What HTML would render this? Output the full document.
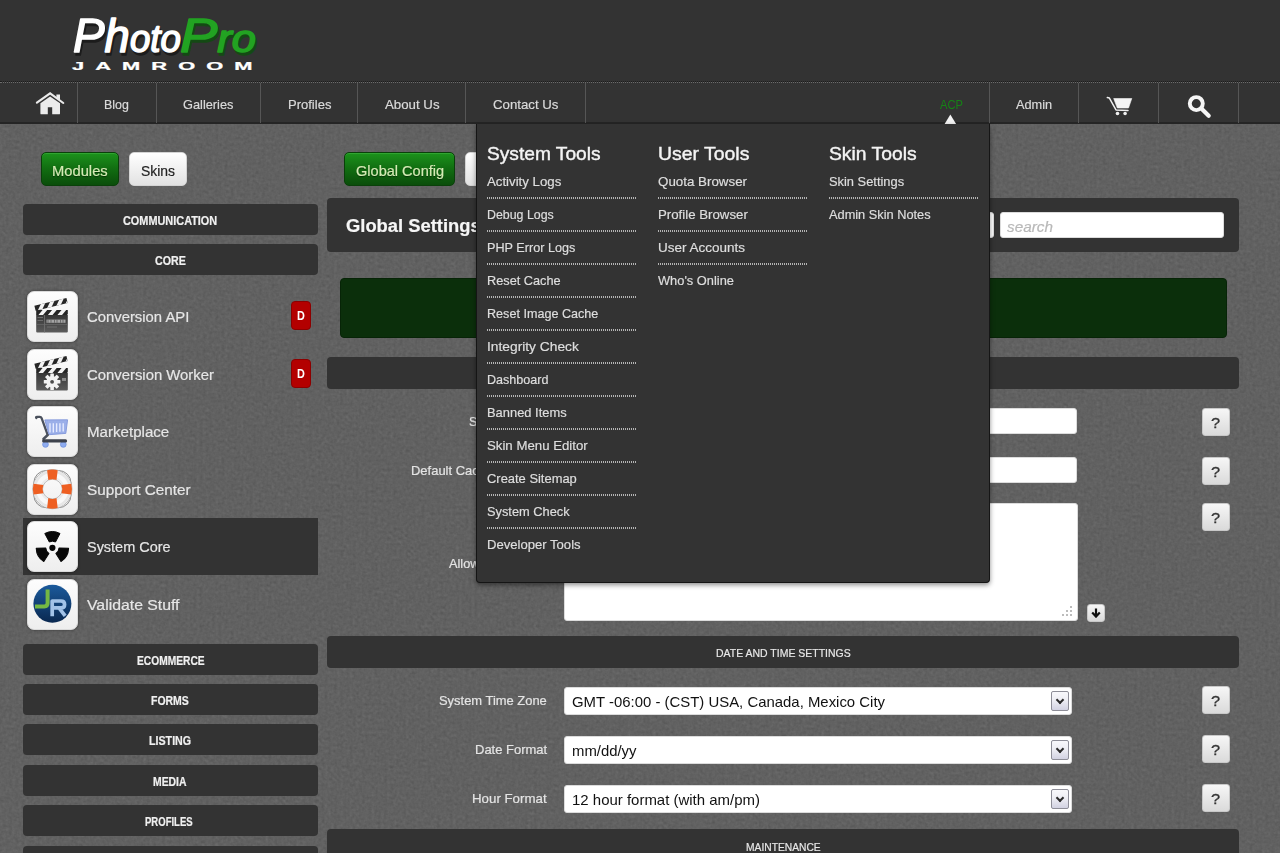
<!DOCTYPE html>
<html lang="en">
<head>
<meta charset="utf-8">
<title>Global Settings - PhotoPro Jamroom</title>
<style>
*{box-sizing:border-box;margin:0;padding:0}
html,body{width:1280px;height:853px;overflow:hidden}
body{position:relative;background:#5d5d5d;font-family:"Liberation Sans",sans-serif;color:#e6e6e6;font-size:13px}
.abs{position:absolute}
#noise{position:absolute;left:0;top:0;width:1280px;height:853px;opacity:.13;pointer-events:none}
.x{text-decoration:none;font-weight:normal;position:absolute;white-space:nowrap;transform-origin:0 50%;display:block;-webkit-text-stroke:.2px}
#header{position:absolute;left:0;top:0;width:1280px;height:82px;background:#333;border-bottom:1px dotted #1c1c1c}
#nav{position:absolute;left:0;top:82px;width:1280px;height:42px;background:#333;border-top:1px dotted #6c6c6c;border-bottom:2px solid #252525}
#nav .sep{position:absolute;top:0;height:40px;width:0;border-left:1px solid #565656}
.btn{position:absolute;height:34px;border-radius:5px}
.btn.g{background:linear-gradient(#1c931c,#127012 45%,#0a4d0a);border:1px solid #0a400a;box-shadow:inset 0 1px 0 rgba(90,200,90,.35)}
.btn.w{background:linear-gradient(#fff,#e2e2e2);border:1px solid #d4d4d4}
.cat{position:absolute;left:23px;width:295px;height:31px;background:#333;border-radius:4px}
.row{position:absolute;left:23px;width:295px;height:57px;background:#333}
.ic{position:absolute;left:27px;width:51px;height:51px;border-radius:7px;background:linear-gradient(#fdfdfd,#eeeeee);border:1px solid #dadada;box-shadow:0 0 3px rgba(0,0,0,.45)}
.ic svg{position:absolute;left:-1px;top:-1px;width:50px;height:50px}
.d{position:absolute;left:291px;width:20px;height:29px;border-radius:4px;background:#b30000;border:1px solid #8c0000}
.bar{position:absolute;left:327px;width:912px;background:#333;border-radius:4px}
.inp{position:absolute;background:#fff;border:1px solid #dcdcdc;border-radius:3px}
.q{position:absolute;left:1202px;width:28px;height:28px;border-radius:3px;background:linear-gradient(#f6f6f6,#dadada);border:1px solid #c8c8c8}
.sl{position:absolute;left:564px;width:508px;height:28px;background:#fff;border:1px solid #dcdcdc;border-radius:3px}
.sl i{position:absolute;right:2px;top:3px;width:18px;height:20px;border:1px solid #8e8e98;border-radius:2px;background:linear-gradient(#f8f8fb,#eeeef4 45%,#d2d2e2)}
.sl i:after{content:"";position:absolute;left:5px;top:4.5px;width:4px;height:4px;border-right:2px solid #2a2a2a;border-bottom:2px solid #2a2a2a;transform:rotate(45deg)}
#dd{position:absolute;left:476px;top:124px;width:514px;height:459px;background:#333;border:1px solid #151515;border-top:0;border-radius:0 0 4px 4px;box-shadow:0 2px 5px rgba(0,0,0,.45)}
.dot{position:absolute;width:150px;height:2px;background:repeating-linear-gradient(90deg,#b4b4b4 0,#b4b4b4 1px,transparent 1px,transparent 2px)}
</style>
</head>
<body>
<svg id="noise" width="1280" height="853"><filter id="nf" x="0" y="0" width="100%" height="100%" color-interpolation-filters="sRGB"><feTurbulence type="fractalNoise" baseFrequency="0.32" numOctaves="2" seed="3"/><feColorMatrix type="matrix" values="0.36 0.36 0.36 0 -0.04  0.36 0.36 0.36 0 -0.04  0.36 0.36 0.36 0 -0.04  0 0 0 0 1"/></filter><rect width="1280" height="853" filter="url(#nf)"/></svg>
<div id="header">
<svg class="abs" style="left:60px;top:0" width="220" height="82" viewBox="0 0 220 82">
<g font-family="'Liberation Sans',sans-serif" font-weight="normal" font-style="italic" stroke-linejoin="round" stroke-linecap="round" stroke-width="1.5">
<text x="13" y="52" fill="#1c1c1c" stroke="#1c1c1c" transform="translate(1.5,2.5)" textLength="108" lengthAdjust="spacingAndGlyphs"><tspan font-size="49">P</tspan><tspan font-size="47">h</tspan><tspan font-size="38">oto</tspan></text>
<text x="13" y="52" fill="#fff" stroke="#fff" textLength="108" lengthAdjust="spacingAndGlyphs"><tspan font-size="49">P</tspan><tspan font-size="47">h</tspan><tspan font-size="38">oto</tspan></text>
<text x="120" y="52" fill="#144a14" stroke="#144a14" transform="translate(1.5,2.5)" textLength="76" lengthAdjust="spacingAndGlyphs"><tspan font-size="49">P</tspan><tspan font-size="38">ro</tspan></text>
<text x="120" y="52" fill="#22a322" stroke="#22a322" textLength="76" lengthAdjust="spacingAndGlyphs"><tspan font-size="49">P</tspan><tspan font-size="38">ro</tspan></text>
</g>
<g transform="translate(12,70) scale(1.9,1)"><text x="0" y="0" font-family="'Liberation Sans',sans-serif" font-weight="bold" font-size="11.5" fill="#fff" stroke="#fff" stroke-width=".25" textLength="95" lengthAdjust="spacing">JAMROOM</text></g>
</svg>
</div>

<div id="nav">
<span class="sep" style="left:77px"></span>
<span class="sep" style="left:156px"></span>
<span class="sep" style="left:260px"></span>
<span class="sep" style="left:357px"></span>
<span class="sep" style="left:465px"></span>
<span class="sep" style="left:585px"></span>
<span class="sep" style="left:989px"></span>
<span class="sep" style="left:1078px"></span>
<span class="sep" style="left:1158px"></span>
<span class="sep" style="left:1238px"></span>
<svg class="abs" style="left:34px;top:7px" width="32" height="28" viewBox="0 0 32 28"><path d="M2.9 12.7 L16.1 3.3 L29.3 13" fill="none" stroke="#ebebeb" stroke-width="2.1" stroke-linecap="round" stroke-linejoin="miter"/><path d="M22.4 4.5 H26 V10.2 L22.4 7.4 Z" fill="#ebebeb"/><path d="M6.4 13.2 L16.1 6.5 L26 13.2 V23.4 Q26 24.3 25.1 24.3 H18.2 V17.2 H13.8 V24.3 H7.3 Q6.4 24.3 6.4 23.4 Z" fill="#ebebeb"/></svg>
<svg class="abs" style="left:1105px;top:12px" width="30" height="24" viewBox="0 0 30 24"><path d="M2.3 2.6 L4.4 3.1 L11 14.9 L23 15.4" fill="none" stroke="#f0f0f0" stroke-width="1.5" stroke-linecap="round" stroke-linejoin="round"/><path d="M8.7 3.5 L26.8 3.5 L23.5 13 L12.3 13 Z" fill="#f4f4f4" stroke="#f4f4f4" stroke-width=".6" stroke-linejoin="round"/><circle cx="12.5" cy="18.5" r="1.8" fill="#f0f0f0"/><circle cx="20.1" cy="18.5" r="1.8" fill="#f0f0f0"/></svg>
<svg class="abs" style="left:1186px;top:11px" width="28" height="26" viewBox="0 0 28 26"><circle cx="10.3" cy="9.6" r="6.5" fill="none" stroke="#f6f6f6" stroke-width="3.9"/><path d="M15.6 14.8 L22.7 21.8" stroke="#f6f6f6" stroke-width="4.2" stroke-linecap="round"/></svg>
<svg class="abs" style="left:944px;top:31px" width="13" height="11" viewBox="0 0 13 11"><path d="M0.6 10 L6.35 0.5 L12.1 10 Z" fill="#f4f4f4"/></svg>
</div>
<a class="x" style="left:104.2px;top:95.0px;line-height:20px;font-size:13.5px;color:#dadada;transform:scaleX(0.9178);">Blog</a>
<a class="x" style="left:183.4px;top:95.0px;line-height:20px;font-size:13.5px;color:#dadada;transform:scaleX(0.9461);">Galleries</a>
<a class="x" style="left:287.9px;top:95.0px;line-height:20px;font-size:13.5px;color:#dadada;transform:scaleX(0.9643);">Profiles</a>
<a class="x" style="left:384.5px;top:95.0px;line-height:20px;font-size:13.5px;color:#dadada;transform:scaleX(0.9816);">About Us</a>
<a class="x" style="left:493.0px;top:95.0px;line-height:20px;font-size:13.5px;color:#dadada;transform:scaleX(0.9795);">Contact Us</a>
<a class="x" style="left:939.5px;top:94.7px;line-height:20px;font-size:13.5px;color:#168216;-webkit-text-stroke:0;transform:scaleX(0.8251);">ACP</a>
<a class="x" style="left:1015.8px;top:95.0px;line-height:20px;font-size:13.5px;color:#dadada;transform:scaleX(0.9437);">Admin</a>
<aside id="sidebar">
<div class="btn g" style="left:41px;top:152px;width:78px"></div>
<span class="x" style="left:52.1px;top:160.6px;line-height:20px;font-size:15px;color:#d4ecb4;text-shadow:0 1px 1px #063006;transform:scaleX(0.9823);">Modules</span>
<div class="btn w" style="left:129px;top:152px;width:58px"></div>
<span class="x" style="left:140.9px;top:160.7px;line-height:20px;font-size:15px;color:#222;transform:scaleX(0.9267);">Skins</span>
<div class="cat" style="top:204px"></div>
<span class="x" style="left:123.1px;top:211.3px;line-height:20px;font-size:12px;color:#f0f0f0;font-weight:bold;transform:scaleX(0.9080);">COMMUNICATION</span>
<div class="cat" style="top:244px"></div>
<span class="x" style="left:155.4px;top:251.3px;line-height:20px;font-size:12px;color:#f0f0f0;font-weight:bold;transform:scaleX(0.8889);">CORE</span>
<div class="ic" style="top:291px"><svg viewBox="0 0 50 50"><defs><linearGradient id="cb1" x1="0" y1="0" x2="0" y2="1"><stop offset="0" stop-color="#353535"/><stop offset="1" stop-color="#5c5c5c"/></linearGradient><clipPath id="ca1"><rect x="9.2" y="19" width="31.6" height="5"/></clipPath><clipPath id="cc11"><rect x="8" y="14.6" width="33" height="5.2"/></clipPath></defs><rect x="9.2" y="23.5" width="31.6" height="18" rx="1" fill="url(#cb1)"/><rect x="9.2" y="19" width="31.6" height="5" fill="#262626"/><g clip-path="url(#ca1)" fill="#f3f3f3"><path d="M11 24.5 l5 -6 h4.6 l-5 6z M20.5 24.5 l5 -6 h4.6 l-5 6z M30 24.5 l5 -6 h4.6 l-5 6z M39.5 24.5 l5 -6 h4.6 l-5 6z"/></g><g transform="rotate(-13.7 8.2 17.2)"><rect x="8" y="14.6" width="33" height="5.2" fill="#262626"/><g clip-path="url(#cc11)" fill="#f3f3f3"><path d="M10 20.3 l5 -6.2 h4.6 l-5 6.2z M19.5 20.3 l5 -6.2 h4.6 l-5 6.2z M29 20.3 l5 -6.2 h4.6 l-5 6.2z M38.5 20.3 l5 -6.2 h4.6 l-5 6.2z"/></g></g><path d="M17.5 24 V41.5" stroke="#777" stroke-width=".7"/><path d="M9.2 33.5 H40.8" stroke="#6e6e6e" stroke-width=".6"/><rect x="19.5" y="28.6" width="19" height="3.2" fill="#a4a4a4"/><path d="M21 28.6v3.2M24 28.6v3.2M27.5 28.6v3.2M30 28.6v3.2M33.5 28.6v3.2M36 28.6v3.2" stroke="#555" stroke-width=".7"/><rect x="10.5" y="26" width="5.5" height="1" fill="#6c6c6c"/><rect x="10.5" y="29" width="5.5" height="1" fill="#6c6c6c"/><rect x="20" y="35.5" width="10" height="1" fill="#707070"/></svg></div>
<a class="x" style="left:87.2px;top:307.3px;line-height:20px;font-size:15.4px;color:#e6e6e6;transform:scaleX(0.9645);">Conversion API</a>
<div class="d" style="top:301px"></div>
<span class="x" style="left:297.3px;top:306.0px;line-height:20px;font-size:12.5px;color:#fff;font-weight:bold;-webkit-text-stroke:0;transform:scaleX(0.8692);">D</span>
<div class="ic" style="top:349px"><svg viewBox="0 0 50 50"><defs><linearGradient id="cb2" x1="0" y1="0" x2="0" y2="1"><stop offset="0" stop-color="#353535"/><stop offset="1" stop-color="#5c5c5c"/></linearGradient><clipPath id="ca2"><rect x="9.2" y="19" width="31.6" height="5"/></clipPath><clipPath id="cc12"><rect x="8" y="14.6" width="33" height="5.2"/></clipPath></defs><rect x="9.2" y="23.5" width="31.6" height="18" rx="1" fill="url(#cb2)"/><rect x="9.2" y="19" width="31.6" height="5" fill="#262626"/><g clip-path="url(#ca2)" fill="#f3f3f3"><path d="M11 24.5 l5 -6 h4.6 l-5 6z M20.5 24.5 l5 -6 h4.6 l-5 6z M30 24.5 l5 -6 h4.6 l-5 6z M39.5 24.5 l5 -6 h4.6 l-5 6z"/></g><g transform="rotate(-13.7 8.2 17.2)"><rect x="8" y="14.6" width="33" height="5.2" fill="#262626"/><g clip-path="url(#cc12)" fill="#f3f3f3"><path d="M10 20.3 l5 -6.2 h4.6 l-5 6.2z M19.5 20.3 l5 -6.2 h4.6 l-5 6.2z M29 20.3 l5 -6.2 h4.6 l-5 6.2z M38.5 20.3 l5 -6.2 h4.6 l-5 6.2z"/></g></g><g transform="translate(25.1 32.8)" fill="#f2f2f2"><circle r="5.7"/><rect x="-1.8" y="-8.3" width="3.6" height="16.6" rx=".5" transform="rotate(0)"/><rect x="-1.8" y="-8.3" width="3.6" height="16.6" rx=".5" transform="rotate(45)"/><rect x="-1.8" y="-8.3" width="3.6" height="16.6" rx=".5" transform="rotate(90)"/><rect x="-1.8" y="-8.3" width="3.6" height="16.6" rx=".5" transform="rotate(135)"/><circle r="1.9" fill="#4a4a4a"/></g><rect x="35" y="29" width="4" height="3" fill="#8a8a8a"/></svg></div>
<a class="x" style="left:87.2px;top:365.3px;line-height:20px;font-size:15.4px;color:#e6e6e6;transform:scaleX(0.9657);">Conversion Worker</a>
<div class="d" style="top:359px"></div>
<span class="x" style="left:297.3px;top:364.0px;line-height:20px;font-size:12.5px;color:#fff;font-weight:bold;-webkit-text-stroke:0;transform:scaleX(0.8692);">D</span>
<div class="ic" style="top:406px"><svg viewBox="0 0 50 50"><circle cx="18.5" cy="38.4" r="2.9" fill="#8eacf0" stroke="#6f8fdc" stroke-width=".7"/><circle cx="36.3" cy="38.4" r="2.9" fill="#8eacf0" stroke="#6f8fdc" stroke-width=".7"/><path d="M9.3 12 Q8.6 10.9 10 10.9 h2.8 q1.3 0 1.8 1.3 l6 16.4" fill="none" stroke="#4b515d" stroke-width="2.3" stroke-linecap="round"/><path d="M17.8 13.9 L40.6 13.8 L38.8 27.4 L22 28.7 Z" fill="#9bafe9" stroke="#8196da" stroke-width=".9"/><path d="M23 17.3 V26.6 M26.3 17.3 V26.4 M29.6 17.3 V26.1 M32.9 17.3 V25.8 M36.2 17.3 V25.5" stroke="#e6ebff" stroke-width="1.4"/><path d="M20.7 29 L16.4 33 " fill="none" stroke="#4b515d" stroke-width="2.4" stroke-linecap="round"/><path d="M16.6 34.9 H38.6" fill="none" stroke="#3d424c" stroke-width="3.1" stroke-linecap="round"/></svg></div>
<a class="x" style="left:87.2px;top:422.3px;line-height:20px;font-size:15.4px;color:#e6e6e6;transform:scaleX(0.9807);">Marketplace</a>
<div class="ic" style="top:464px"><svg viewBox="0 0 50 50"><rect x="6.8" y="6.5" width="37.2" height="37.2" rx="12.5" fill="none" stroke="#8c8c8c" stroke-width="1"/><circle cx="25.4" cy="25.1" r="14.75" fill="none" stroke="#f8f8f8" stroke-width="9.7"/><circle cx="25.4" cy="25.1" r="19.6" fill="none" stroke="#a0a0a0" stroke-width=".7"/><circle cx="25.4" cy="25.1" r="9.9" fill="none" stroke="#a0a0a0" stroke-width=".7"/><circle cx="25.4" cy="25.1" r="17.6" fill="none" stroke="#e6e6e6" stroke-width="2.4"/><circle cx="25.4" cy="25.1" r="11.4" fill="none" stroke="#ececec" stroke-width="1.6"/><g fill="#ee5f22"><path d="M20.1 6.25 A19.6 19.6 0 0 1 30.7 6.25 L29.5 16.1 A9.9 9.9 0 0 0 21.3 16.1 Z"/><path d="M20.1 6.25 A19.6 19.6 0 0 1 30.7 6.25 L29.5 16.1 A9.9 9.9 0 0 0 21.3 16.1 Z" transform="rotate(90 25.4 25.1)"/><path d="M20.1 6.25 A19.6 19.6 0 0 1 30.7 6.25 L29.5 16.1 A9.9 9.9 0 0 0 21.3 16.1 Z" transform="rotate(180 25.4 25.1)"/><path d="M20.1 6.25 A19.6 19.6 0 0 1 30.7 6.25 L29.5 16.1 A9.9 9.9 0 0 0 21.3 16.1 Z" transform="rotate(270 25.4 25.1)"/></g></svg></div>
<a class="x" style="left:87.2px;top:480.3px;line-height:20px;font-size:15.4px;color:#e6e6e6;transform:scaleX(0.9927);">Support Center</a>
<div class="row" style="top:518px"></div>
<div class="ic" style="top:521px"><svg viewBox="0 0 50 50"><g transform="translate(25.4 26.8)" fill="#080808"><circle r="3.1"/><path d="M-3.10 -5.83 L-7.61 -14.30 A16.2 16.2 0 0 1 7.61 -14.30 L3.10 -5.83 A6.6 6.6 0 0 0 -3.10 -5.83 Z" stroke="#080808" stroke-width="1" stroke-linejoin="round"/><path d="M-3.10 -5.83 L-7.61 -14.30 A16.2 16.2 0 0 1 7.61 -14.30 L3.10 -5.83 A6.6 6.6 0 0 0 -3.10 -5.83 Z" stroke="#080808" stroke-width="1" stroke-linejoin="round" transform="rotate(120)"/><path d="M-3.10 -5.83 L-7.61 -14.30 A16.2 16.2 0 0 1 7.61 -14.30 L3.10 -5.83 A6.6 6.6 0 0 0 -3.10 -5.83 Z" stroke="#080808" stroke-width="1" stroke-linejoin="round" transform="rotate(240)"/></g></svg></div>
<a class="x" style="left:87.2px;top:537.3px;line-height:20px;font-size:15.4px;color:#e6e6e6;transform:scaleX(0.9390);">System Core</a>
<div class="ic" style="top:579px"><svg viewBox="0 0 50 50"><defs><linearGradient id="jrg" x1="0" y1="0" x2="0" y2="1"><stop offset="0" stop-color="#1b5a9c"/><stop offset="1" stop-color="#0a2850"/></linearGradient></defs><circle cx="25.4" cy="24.8" r="19" fill="url(#jrg)"/><path d="M20.6 10.5 V24 Q20.6 27.4 17.4 27.4 H8" fill="none" stroke="#74b843" stroke-width="4"/><path d="M25.2 37.2 V22 H34 Q37.6 22 37.6 25.4 Q37.6 28.8 34 28.8 H26.5 M32 28.8 L38.2 36.8" fill="none" stroke="#a3c3e8" stroke-width="3.7" stroke-linejoin="round"/></svg></div>
<a class="x" style="left:87.2px;top:595.3px;line-height:20px;font-size:15.4px;color:#e6e6e6;transform:scaleX(1.0264);">Validate Stuff</a>
<div class="cat" style="top:644px"></div>
<span class="x" style="left:136.5px;top:651.3px;line-height:20px;font-size:12px;color:#f0f0f0;font-weight:bold;transform:scaleX(0.8522);">ECOMMERCE</span>
<div class="cat" style="top:684px"></div>
<span class="x" style="left:151.0px;top:691.3px;line-height:20px;font-size:12px;color:#f0f0f0;font-weight:bold;transform:scaleX(0.8726);">FORMS</span>
<div class="cat" style="top:724px"></div>
<span class="x" style="left:149.2px;top:731.3px;line-height:20px;font-size:12px;color:#f0f0f0;font-weight:bold;transform:scaleX(0.8897);">LISTING</span>
<div class="cat" style="top:765px"></div>
<span class="x" style="left:153.3px;top:772.3px;line-height:20px;font-size:12px;color:#f0f0f0;font-weight:bold;transform:scaleX(0.8668);">MEDIA</span>
<div class="cat" style="top:805px"></div>
<span class="x" style="left:144.9px;top:812.3px;line-height:20px;font-size:12px;color:#f0f0f0;font-weight:bold;transform:scaleX(0.7935);">PROFILES</span>
<div class="cat" style="top:846px"></div>
<span class="x" style="left:149.6px;top:853.3px;line-height:20px;font-size:12px;color:#f0f0f0;font-weight:bold;transform:scaleX(0.8252);">SYSTEM</span>
</aside>
<main id="content">
<div class="btn g" style="left:344px;top:152px;width:111px"></div>
<span class="x" style="left:356.1px;top:160.6px;line-height:20px;font-size:15px;color:#d4ecb4;text-shadow:0 1px 1px #063006;transform:scaleX(0.9693);">Global Config</span>
<div class="btn w" style="left:465px;top:152px;width:60px"></div>
<span class="x" style="left:477.6px;top:160.7px;line-height:20px;font-size:15px;color:#222;transform:scaleX(0.9963);">Tools</span>
<div class="bar" style="top:198px;height:54px"></div>
<h1 class="x" style="left:346.3px;top:216.1px;line-height:20px;font-size:18.7px;color:#f6f6f6;font-weight:bold;transform:scaleX(0.9829);">Global Settings</h1>
<div class="inp" style="left:768px;top:212px;width:226px;height:26px"></div>
<div class="inp" style="left:1000px;top:212px;width:224px;height:26px"></div>
<span class="x" style="left:1006.5px;top:216.7px;line-height:20px;font-size:15px;color:#b8b8b8;font-style:italic;transform:scaleX(1.0193);">search</span>
<div class="abs" style="left:340px;top:278px;width:887px;height:60px;background:#0b2f0b;border:1px solid #072407;border-radius:4px"></div>
<span class="x" style="left:649.6px;top:298.7px;line-height:20px;font-size:14px;color:#dfe9df;transform:scaleX(1.0063);">The settings have been successfully saved</span>
<div class="bar" style="top:357px;height:32px"></div>
<span class="x" style="left:732.7px;top:364.0px;line-height:20px;font-size:11px;color:#e8e8e8;transform:scaleX(0.9131);">GENERAL SETTINGS</span>
<span class="x" style="left:469.1px;top:412.2px;line-height:20px;font-size:13px;color:#e4e4e4;transform:scaleX(0.9527);">System Name</span>
<div class="inp" style="left:564px;top:408px;width:513px;height:26px"></div>
<span class="x" style="left:410.6px;top:461.2px;line-height:20px;font-size:13px;color:#e4e4e4;transform:scaleX(0.9977);">Default Cache Seconds</span>
<div class="inp" style="left:564px;top:457px;width:513px;height:26px"></div>
<span class="x" style="left:448.6px;top:553.7px;line-height:20px;font-size:13px;color:#e4e4e4;transform:scaleX(0.9785);">Allowed Domains</span>
<div class="inp" style="left:564px;top:503px;width:514px;height:118px"><svg class="abs" style="right:4px;bottom:3px" width="12" height="12" viewBox="0 0 12 12"><g fill="#bcbcbc"><rect x="9" y="1" width="2" height="2"/><rect x="5" y="5" width="2" height="2"/><rect x="9" y="5" width="2" height="2"/><rect x="1" y="9" width="2" height="2"/><rect x="5" y="9" width="2" height="2"/><rect x="9" y="9" width="2" height="2"/></g></svg></div>
<div class="q" style="top:408px"></div>
<span class="x" style="left:1211.3px;top:413.0px;line-height:20px;font-size:15px;color:#333;-webkit-text-stroke:.3px;transform:scaleX(1.0906);">?</span>
<div class="q" style="top:457px"></div>
<span class="x" style="left:1211.3px;top:462.0px;line-height:20px;font-size:15px;color:#333;-webkit-text-stroke:.3px;transform:scaleX(1.0906);">?</span>
<div class="q" style="top:503px"></div>
<span class="x" style="left:1211.3px;top:508.0px;line-height:20px;font-size:15px;color:#333;-webkit-text-stroke:.3px;transform:scaleX(1.0906);">?</span>
<div class="q" style="top:686px"></div>
<span class="x" style="left:1211.3px;top:691.0px;line-height:20px;font-size:15px;color:#333;-webkit-text-stroke:.3px;transform:scaleX(1.0906);">?</span>
<div class="q" style="top:735px"></div>
<span class="x" style="left:1211.3px;top:740.0px;line-height:20px;font-size:15px;color:#333;-webkit-text-stroke:.3px;transform:scaleX(1.0906);">?</span>
<div class="q" style="top:784px"></div>
<span class="x" style="left:1211.3px;top:789.0px;line-height:20px;font-size:15px;color:#333;-webkit-text-stroke:.3px;transform:scaleX(1.0906);">?</span>
<div class="q" style="left:1087px;top:604px;width:18px;height:18px"><svg class="abs" style="left:3px;top:3px" width="10" height="10" viewBox="0 0 10 10"><path d="M5 0.5 V8 M1.2 4.6 L5 8.6 L8.8 4.6" fill="none" stroke="#111" stroke-width="2.2"/></svg></div>
<div class="bar" style="top:636px;height:32px"></div>
<span class="x" style="left:715.7px;top:642.7px;line-height:20px;font-size:11.6px;color:#e8e8e8;transform:scaleX(0.9038);">DATE AND TIME SETTINGS</span>
<label class="x" style="left:439.1px;top:691.0px;line-height:20px;font-size:13px;color:#e4e4e4;transform:scaleX(0.9945);">System Time Zone</label>
<div class="sl" style="top:687px"><i></i></div>
<span class="x" style="left:571.9px;top:691.9px;line-height:20px;font-size:15px;color:#111;-webkit-text-stroke:0;transform:scaleX(0.9942);">GMT -06:00 - (CST) USA, Canada, Mexico City</span>
<label class="x" style="left:474.7px;top:740.0px;line-height:20px;font-size:13px;color:#e4e4e4;transform:scaleX(0.9990);">Date Format</label>
<div class="sl" style="top:736px"><i></i></div>
<span class="x" style="left:571.9px;top:740.9px;line-height:20px;font-size:15px;color:#111;-webkit-text-stroke:0;transform:scaleX(0.9921);">mm/dd/yy</span>
<label class="x" style="left:472.3px;top:789.0px;line-height:20px;font-size:13px;color:#e4e4e4;transform:scaleX(1.0221);">Hour Format</label>
<div class="sl" style="top:785px"><i></i></div>
<span class="x" style="left:571.9px;top:789.9px;line-height:20px;font-size:15px;color:#111;-webkit-text-stroke:0;transform:scaleX(0.9978);">12 hour format (with am/pm)</span>
<div class="bar" style="top:829px;height:32px"></div>
<span class="x" style="left:745.7px;top:836.5px;line-height:20px;font-size:11.6px;color:#e8e8e8;transform:scaleX(0.8851);">MAINTENANCE</span>
</main>
<div id="acpmenu">
<div id="dd"></div>
<h3 class="x" style="left:486.9px;top:143.9px;line-height:20px;font-size:18.4px;color:#f4f4f4;-webkit-text-stroke:.4px #f4f4f4;transform:scaleX(1.0419);">System Tools</h3>
<a class="x" style="left:487.1px;top:171.8px;line-height:20px;font-size:13.4px;color:#dedede;transform:scaleX(0.9885);">Activity Logs</a>
<div class="dot" style="left:487px;top:197px"></div>
<a class="x" style="left:487.1px;top:204.8px;line-height:20px;font-size:13.4px;color:#dedede;transform:scaleX(0.9250);">Debug Logs</a>
<div class="dot" style="left:487px;top:230px"></div>
<a class="x" style="left:487.1px;top:237.8px;line-height:20px;font-size:13.4px;color:#dedede;transform:scaleX(0.9441);">PHP Error Logs</a>
<div class="dot" style="left:487px;top:263px"></div>
<a class="x" style="left:487.1px;top:270.8px;line-height:20px;font-size:13.4px;color:#dedede;transform:scaleX(0.9507);">Reset Cache</a>
<div class="dot" style="left:487px;top:296px"></div>
<a class="x" style="left:487.1px;top:303.8px;line-height:20px;font-size:13.4px;color:#dedede;transform:scaleX(0.9404);">Reset Image Cache</a>
<div class="dot" style="left:487px;top:329px"></div>
<a class="x" style="left:487.1px;top:336.8px;line-height:20px;font-size:13.4px;color:#dedede;transform:scaleX(1.0290);">Integrity Check</a>
<div class="dot" style="left:487px;top:362px"></div>
<a class="x" style="left:487.1px;top:369.8px;line-height:20px;font-size:13.4px;color:#dedede;transform:scaleX(0.9388);">Dashboard</a>
<div class="dot" style="left:487px;top:395px"></div>
<a class="x" style="left:487.1px;top:402.8px;line-height:20px;font-size:13.4px;color:#dedede;transform:scaleX(0.9633);">Banned Items</a>
<div class="dot" style="left:487px;top:428px"></div>
<a class="x" style="left:487.1px;top:435.8px;line-height:20px;font-size:13.4px;color:#dedede;transform:scaleX(0.9876);">Skin Menu Editor</a>
<div class="dot" style="left:487px;top:461px"></div>
<a class="x" style="left:487.1px;top:468.8px;line-height:20px;font-size:13.4px;color:#dedede;transform:scaleX(0.9651);">Create Sitemap</a>
<div class="dot" style="left:487px;top:494px"></div>
<a class="x" style="left:487.1px;top:501.8px;line-height:20px;font-size:13.4px;color:#dedede;transform:scaleX(0.9569);">System Check</a>
<div class="dot" style="left:487px;top:527px"></div>
<a class="x" style="left:487.1px;top:534.8px;line-height:20px;font-size:13.4px;color:#dedede;transform:scaleX(0.9773);">Developer Tools</a>
<h3 class="x" style="left:657.7px;top:143.9px;line-height:20px;font-size:18.4px;color:#f4f4f4;-webkit-text-stroke:.4px #f4f4f4;transform:scaleX(1.0561);">User Tools</h3>
<a class="x" style="left:657.9px;top:171.8px;line-height:20px;font-size:13.4px;color:#dedede;transform:scaleX(0.9965);">Quota Browser</a>
<div class="dot" style="left:658px;top:197px"></div>
<a class="x" style="left:657.9px;top:204.8px;line-height:20px;font-size:13.4px;color:#dedede;transform:scaleX(0.9891);">Profile Browser</a>
<div class="dot" style="left:658px;top:230px"></div>
<a class="x" style="left:657.9px;top:237.8px;line-height:20px;font-size:13.4px;color:#dedede;transform:scaleX(1.0065);">User Accounts</a>
<div class="dot" style="left:658px;top:263px"></div>
<a class="x" style="left:657.9px;top:270.8px;line-height:20px;font-size:13.4px;color:#dedede;transform:scaleX(0.9582);">Who&#39;s Online</a>
<h3 class="x" style="left:828.6px;top:143.9px;line-height:20px;font-size:18.4px;color:#f4f4f4;-webkit-text-stroke:.4px #f4f4f4;transform:scaleX(1.0493);">Skin Tools</h3>
<a class="x" style="left:828.8px;top:171.8px;line-height:20px;font-size:13.4px;color:#dedede;transform:scaleX(0.9609);">Skin Settings</a>
<div class="dot" style="left:829px;top:197px"></div>
<a class="x" style="left:828.8px;top:204.8px;line-height:20px;font-size:13.4px;color:#dedede;transform:scaleX(0.9546);">Admin Skin Notes</a>
</div>
</body>
</html>
